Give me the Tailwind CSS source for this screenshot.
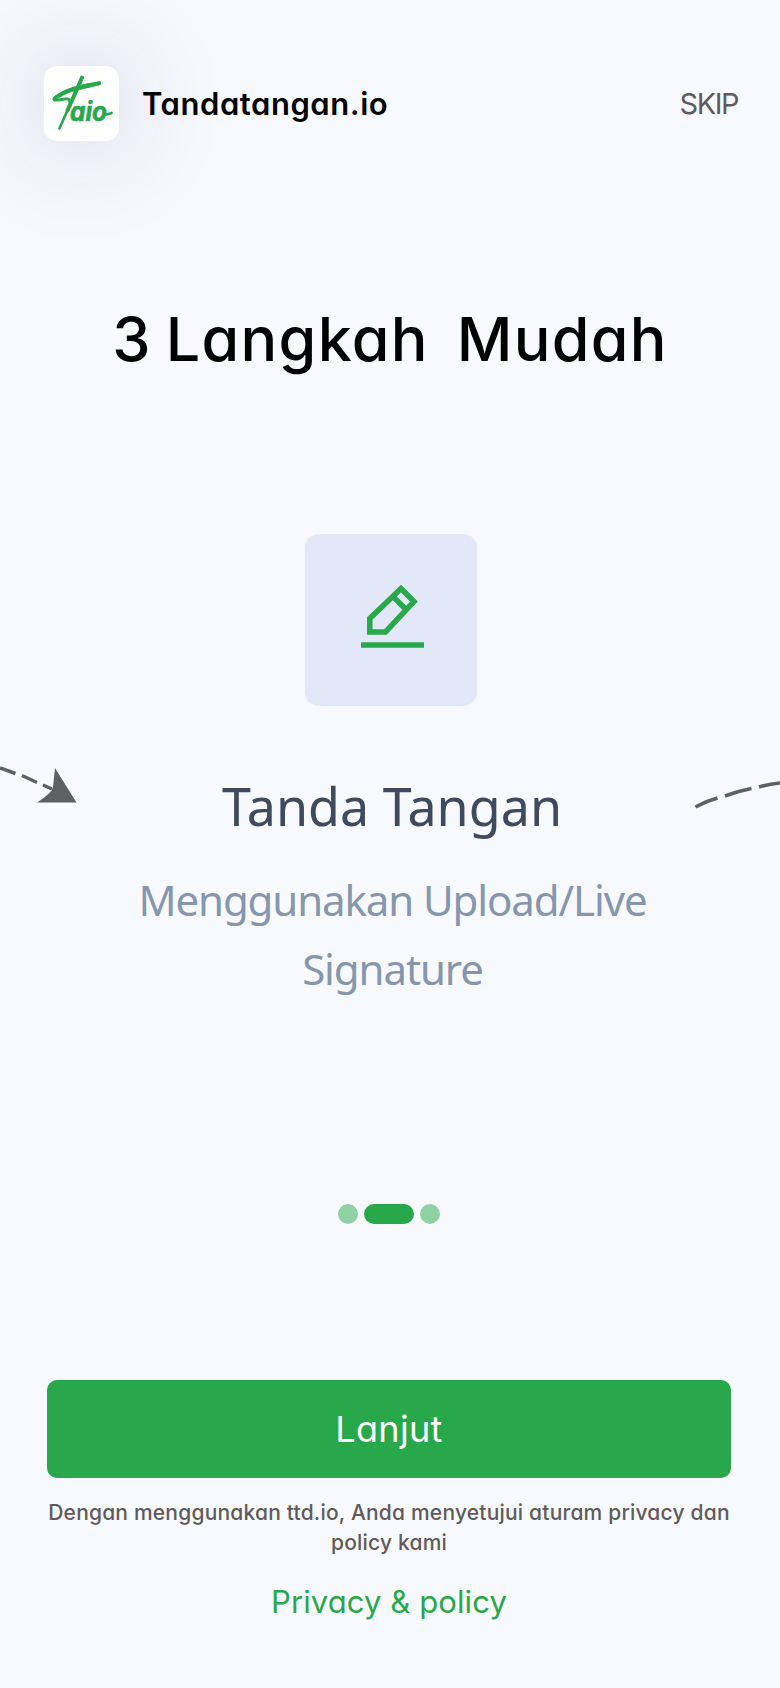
<!DOCTYPE html>
<html lang="id">
<head>
<meta charset="utf-8">
<title>Tandatangan.io</title>
<script src="https://cdn.jsdelivr.net/npm/@tailwindcss/browser@4"></script>
</head>
<body class="bg-[#f8f9fe]">
<main class="flex h-[1688px] w-[780px] flex-col overflow-hidden bg-[#f8f9fe] font-['Inter',sans-serif] [font-feature-settings:'cv11']">
  <header class="mt-[65.5px] flex h-[75px] shrink-0 items-center pr-[42px] pl-[43.5px]">
    <svg class="size-[75px] shrink-0 rounded-[13px] bg-white shadow-[0_0_100px_14px_rgba(40,8,80,0.13)]" viewBox="43.5 65.5 75 75" fill="none" stroke="#28a84a" stroke-linecap="round" stroke-linejoin="round">
      <path d="M81.500 76.800C77.500 87 69 105 59 128" stroke-width="2.600"/>
      <path d="M81.500 77C78 86 73 96 67 110" stroke-width="4"/>
      <path d="M99 82.500C84 84 63 89 53.500 98C52.500 100.500 57 100 66 98.200Q69 98.500 69 101" stroke-width="2.800"/>
      <path d="M98.500 82.700C84 86.500 67 88 54.500 98" stroke-width="4.200"/>
      <path d="M104 113.500Q107 114.500 111 112.500" stroke-width="2.800"/>
      <text x="69.500" y="120.500" font-size="26" font-weight="700" font-style="italic" fill="#28a84a" stroke-width="0.600" textLength="37" lengthAdjust="spacingAndGlyphs">aio</text>
    </svg>
    <h1 class="ml-[23.5px] pt-px text-[31px] leading-10 font-semibold tracking-[0.55px] whitespace-nowrap text-black"><span>Tandatangan.io</span></h1>
    <a class="ml-auto pt-px text-[29px] leading-10 tracking-[-1.5px] text-[#5f5b5a]"><span>SKIP</span></a>
  </header>

  <h2 class="mt-[158.5px] shrink-0 text-center text-[61px] leading-[80px] font-medium tracking-[1.3px] [word-spacing:-3.5px] whitespace-pre text-black"><span>3 Langkah  Mudah</span></h2>

  <section class="mt-[155px] flex shrink-0 flex-col items-center font-['Noto_Sans',sans-serif]">
    <div class="ml-[2px] size-[172px] rounded-[14px] bg-[#e2e8f7]">
      <svg class="size-full" viewBox="305 534 172 172" fill="none" stroke="#28a84a" stroke-width="5.500">
        <path d="M369.800 632V618.500L401 588.500L414 601.500L385.500 632Z"/>
        <path d="M393 596.500L406 609.500"/>
        <path d="M361 645H424"/>
      </svg>
    </div>
    <div class="mt-[64px] flex h-[72px] w-full items-center justify-between">
      <svg class="h-[72px] w-[120px] overflow-visible" viewBox="0 770 120 72" fill="none" stroke="#5f6062" stroke-width="3.500">
        <path d="M0 768L15.500 773.500M22 775.500L37 782.500M43 785L52 789"/>
        <path d="M55 768L76.500 802.500H37Q52 793 53 787Z" fill="#5f6062" stroke="none"/>
      </svg>
      <h3 class="pl-[4px] text-[52px] leading-[72px] whitespace-nowrap text-[#3f4a5f]"><span>Tanda Tangan</span></h3>
      <svg class="h-[72px] w-[120px]" viewBox="660 770 120 72" fill="none" stroke="#5f6062" stroke-width="3.500">
        <path d="M695.500 807Q706 801 717.500 798M725 796Q738 791 751.500 788.500M759 787Q769 784 780 783"/>
      </svg>
    </div>
    <p class="mt-[22.5px] pl-[5px] text-center text-[42px] leading-[69px] tracking-[-1.1px] whitespace-nowrap text-[#8596ad]"><span>Menggunakan Upload/Live</span><br><span>Signature</span></p>
  </section>

  <div class="mt-[201.5px] flex shrink-0 justify-center gap-[6px] pr-[2px]">
    <i class="size-5 rounded-full bg-[#90d2a4]"></i>
    <i class="h-5 w-[50px] rounded-full bg-[#28a84a]"></i>
    <i class="size-5 rounded-full bg-[#90d2a4]"></i>
  </div>

  <footer class="mt-[156px] ml-[47px] flex w-[684px] shrink-0 flex-col text-center">
    <button class="h-[98px] rounded-[10px] bg-[#28a84a] text-[36px] font-normal tracking-[0.3px] text-white"><span>Lanjut</span></button>
    <p class="mt-5 text-[21px] leading-[30px] font-medium tracking-[0.2px] whitespace-nowrap text-[#5f5b5a]"><span>Dengan menggunakan ttd.io, Anda menyetujui aturam privacy dan</span><br><span>policy kami</span></p>
    <a class="mt-6 text-[31px] leading-10 tracking-[0.1px] text-[#28a84a]"><span>Privacy &amp; policy</span></a>
  </footer>
</main>
</body>
</html>
